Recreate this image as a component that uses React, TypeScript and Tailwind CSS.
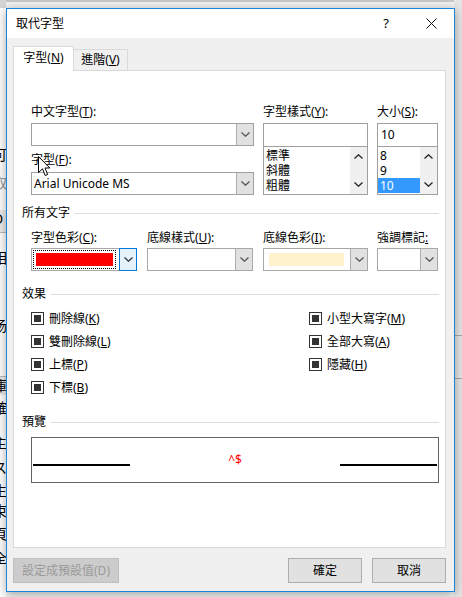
import React from "react";

const Chevron = ({ up = false, color = "#444" }: { up?: boolean; color?: string }) => (
    <svg width="9" height="5" viewBox="0 0 9 5">
        <path
            d={up ? "M0.5 4.5 L4.5 0.8 L8.5 4.5" : "M0.5 0.5 L4.5 4.2 L8.5 0.5"}
            fill="none"
            stroke={color}
            strokeWidth="1.3"
        />
    </svg>
);

function DropButton({ focused = false }: { focused?: boolean }) {
    if (focused) {
        return (
            <div className="w-[18px] -my-px -mr-px flex items-center justify-center bg-[#e5f1fb] border border-[#0078d7]">
                <Chevron color="#333" />
            </div>
        );
    }
    return (
        <div className="w-[17px] flex items-center justify-center bg-[#e1e1e1] border-l border-[#adadad]">
            <Chevron color="#555" />
        </div>
    );
}

function EditCombo({ value = "" }: { value?: string }) {
    return (
        <div className="flex h-[23px] border border-[#a0a0a0] bg-white">
            <div className="flex-1 pl-[2px] leading-[21px]">{value}</div>
            <DropButton />
        </div>
    );
}

function ColorCombo({ fill, focused = false }: { fill?: string; focused?: boolean }) {
    return (
        <div className="flex h-[23px] border border-[#a8a8a8] bg-white">
            <div className="flex-1 p-[1px] pr-[3px]">
                {fill === "red" && (
                    <div className="h-full border border-dotted border-black p-[2px]">
                        <div className="h-full bg-[#ff0000]" />
                    </div>
                )}
                {fill === "cream" && (
                    <div className="h-full p-[3px] pl-[4px]">
                        <div className="h-full bg-[#fff2cc]" />
                    </div>
                )}
            </div>
            <DropButton focused={focused} />
        </div>
    );
}

function ListBox({ items, selected }: { items: string[]; selected?: number }) {
    return (
        <div className="flex h-[49px] border border-[#a0a0a0] bg-white">
            <div className="flex-1 pt-[1px]">
                {items.map((it, i) => (
                    <div
                        key={it}
                        className={
                            i === selected
                                ? "h-[15px] leading-[15px] pl-[2px] overflow-hidden bg-[#3399ff] text-white"
                                : "h-[15px] leading-[15px] pl-[2px] overflow-hidden"
                        }
                    >
                        {it}
                    </div>
                ))}
            </div>
            <div className="w-[17px] bg-[#f0f0f0] flex flex-col items-center justify-between py-[7px]">
                <Chevron up color="#222" />
                <Chevron color="#222" />
            </div>
        </div>
    );
}

function Label({ children }: { children: React.ReactNode }) {
    return <div className="h-[16px] leading-[16px] whitespace-nowrap">{children}</div>;
}

const U = ({ children }: { children: React.ReactNode }) => (
    <span className="underline underline-offset-[1px]">{children}</span>
);

function Heading({ text }: { text: string }) {
    return (
        <div className="flex items-center h-[16px] pl-[8px] pr-[6px]">
            <span className="leading-[16px]">{text}</span>
            <div className="flex-1 h-px bg-[#dcdcdc] ml-[5px]" />
        </div>
    );
}

function Check({ children }: { children: React.ReactNode }) {
    return (
        <div className="flex items-center h-[23px]">
            <div className="w-[13px] h-[13px] border border-[#333] flex items-center justify-center bg-white">
                <div className="w-[7px] h-[7px] bg-[#333]" />
            </div>
            <span className="ml-[5px] leading-[16px]">{children}</span>
        </div>
    );
}

function Btn({ children, disabled = false, wide = false }: { children: React.ReactNode; disabled?: boolean; wide?: boolean }) {
    return (
        <div
            className={
                (wide ? "w-[106px] " : "w-[74px] ") +
                (disabled
                    ? "h-[25px] flex items-center justify-center bg-[#cccccc] border border-[#bfbfbf] text-[#9a9a9a]"
                    : "h-[25px] flex items-center justify-center bg-[#e1e1e1] border border-[#adadad]")
            }
        >
            {children}
        </div>
    );
}

export default function App() {
    return (
        <div className="relative w-[462px] h-[597px] overflow-hidden bg-[#f2f2f2] font-['Noto_Sans','Noto_Sans_CJK_TC',sans-serif] text-[12px] text-black">
            {/* document behind the dialog */}
            <div className="flex h-full">
                <div className="w-[6px] h-full bg-white overflow-hidden flex flex-col text-[14px] leading-[18px]">
                    <div className="h-[8px] bg-[#d6d6d6]" />
                    <div className="h-[138px]" />
                    <div className="-ml-[7px]">可</div>
                    <div className="-ml-[7px] mt-[10px] text-[#9a9a9a]">取</div>
                    <div className="mt-[18px] h-[22px] bg-[#ececec] -ml-[7px]">D</div>
                    <div className="h-px bg-[#bdbdbd]" />
                    <div className="-ml-[7px] mt-[16px]">相</div>
                    <div className="-ml-[7px] mt-[50px]">杨</div>
                    <div className="mt-[41px] h-px bg-[#bdbdbd]" />
                    <div className="-ml-[7px] bg-[#ececec]">庫</div>
                    <div className="-ml-[7px] mt-[4px]">確</div>
                    <div className="-ml-[7px] mt-[17px]">主</div>
                    <div className="-ml-[7px] mt-[7px]">ス</div>
                    <div className="-ml-[7px] mt-[5px]">生</div>
                    <div className="-ml-[7px] mt-[2px]">束</div>
                    <div className="-ml-[7px] mt-[5px]">頁</div>
                    <div className="-ml-[7px] mt-[6px]">全</div>
                </div>
                <div className="flex-1 flex flex-col">
                    <div className="h-[2px] bg-[#c8c8c8]" />
                </div>
                <div className="w-[8px] h-full bg-[#e6e6e6] flex flex-col">
                    <div className="mt-[335px] h-px bg-[#a8a8a8]" />
                    <div className="mt-[42px] h-px bg-[#a8a8a8]" />
                </div>
            </div>

            {/* dialog window */}
            <div className="absolute left-[6px] top-[8px] w-[449px] h-[584px] border border-[#1883d7] bg-[#f0f0f0] flex flex-col shadow-[0_2px_10px_rgba(0,0,0,0.35)]">
                {/* title bar */}
                <div className="h-[29px] bg-white flex items-center shrink-0">
                    <span className="pl-[9px] leading-[16px] flex-1">取代字型</span>
                    <div className="w-[46px] h-full flex items-center justify-center text-[13px] pl-[2px]">?</div>
                    <div className="w-[46px] h-full flex items-center justify-center">
                        <svg width="11" height="11" viewBox="0 0 11 11">
                            <path d="M0.5 0.5 L10.5 10.5 M10.5 0.5 L0.5 10.5" stroke="#111" strokeWidth="1" />
                        </svg>
                    </div>
                </div>

                {/* body */}
                <div className="flex-1 flex flex-col pt-[8px] pl-[6px] pr-[8px]">
                    {/* tabs */}
                    <div className="flex items-end h-[24px] relative z-10">
                        <div className="w-[61px] h-[25px] -mb-px bg-white border border-b-0 border-[#d9d9d9] flex items-center justify-center pb-[2px]">
                            字型(<U>N</U>)
                        </div>
                        <div className="w-[54px] h-[21px] border border-l-0 border-b-0 border-[#d9d9d9] flex items-center justify-center">
                            進階(<U>V</U>)
                        </div>
                    </div>

                    {/* tab panel */}
                    <div className="h-[478px] border border-[#d9d9d9] bg-white flex flex-col">
                        <div className="pl-[17px] pt-[33px] flex gap-[9px]">
                            <div className="w-[223px] flex flex-col">
                                <Label>
                                    中文字型(<U>T</U>):
                                </Label>
                                <div className="mt-[3px]">
                                    <EditCombo />
                                </div>
                                <div className="mt-[6px]">
                                    <Label>
                                        字型(<U>F</U>):
                                    </Label>
                                </div>
                                <div className="mt-[4px]">
                                    <EditCombo value="Arial Unicode MS" />
                                </div>
                            </div>
                            <div className="w-[105px] flex flex-col">
                                <Label>
                                    字型樣式(<U>Y</U>):
                                </Label>
                                <div className="mt-[3px] h-[23px] border border-b-0 border-[#a0a0a0] bg-white" />
                                <ListBox items={["標準", "斜體", "粗體"]} />
                            </div>
                            <div className="w-[61px] flex flex-col">
                                <Label>
                                    大小(<U>S</U>):
                                </Label>
                                <div className="mt-[3px] h-[23px] border border-b-0 border-[#a0a0a0] bg-white pl-[3px] leading-[22px]">
                                    10
                                </div>
                                <ListBox items={["8", "9", "10"]} selected={2} />
                            </div>
                        </div>

                        <div className="mt-[10px]">
                            <Heading text="所有文字" />
                        </div>
                        <div className="pl-[17px] mt-[9px] flex">
                            <div className="w-[106px] flex flex-col">
                                <Label>
                                    字型色彩(<U>C</U>):
                                </Label>
                                <div className="mt-[2px]">
                                    <ColorCombo fill="red" focused />
                                </div>
                            </div>
                            <div className="w-[106px] ml-[10px] flex flex-col">
                                <Label>
                                    底線樣式(<U>U</U>):
                                </Label>
                                <div className="mt-[2px]">
                                    <ColorCombo />
                                </div>
                            </div>
                            <div className="w-[105px] ml-[10px] flex flex-col">
                                <Label>
                                    底線色彩(<U>I</U>):
                                </Label>
                                <div className="mt-[2px]">
                                    <ColorCombo fill="cream" />
                                </div>
                            </div>
                            <div className="w-[61px] ml-[9px] flex flex-col">
                                <Label>
                                    強調標記<U>:</U>
                                </Label>
                                <div className="mt-[2px]">
                                    <ColorCombo />
                                </div>
                            </div>
                        </div>

                        <div className="mt-[15px]">
                            <Heading text="效果" />
                        </div>
                        <div className="pl-[17px] mt-[5px] grid grid-cols-[278px_auto]">
                            <div className="flex flex-col">
                                <Check>
                                    刪除線(<U>K</U>)
                                </Check>
                                <Check>
                                    雙刪除線(<U>L</U>)
                                </Check>
                                <Check>
                                    上標(<U>P</U>)
                                </Check>
                                <Check>
                                    下標(<U>B</U>)
                                </Check>
                            </div>
                            <div className="flex flex-col">
                                <Check>
                                    小型大寫字(<U>M</U>)
                                </Check>
                                <Check>
                                    全部大寫(<U>A</U>)
                                </Check>
                                <Check>
                                    隱藏(<U>H</U>)
                                </Check>
                            </div>
                        </div>

                        <div className="mt-[15px]">
                            <Heading text="預覽" />
                        </div>
                        <div className="ml-[17px] mt-[7px] w-[408px] h-[46px] border border-[#646464] flex items-start">
                            <div className="ml-[1px] mt-[26px] w-[97px] h-[2px] bg-black" />
                            <div className="flex-1 text-center mt-[14px] leading-[16px] text-[#ff0000]">^$</div>
                            <div className="mr-[1px] mt-[26px] w-[97px] h-[2px] bg-black" />
                        </div>
                    </div>

                    {/* buttons */}
                    <div className="mt-[10px] flex items-center">
                        <Btn disabled wide>
                            設定成預設值(D)
                        </Btn>
                        <div className="flex-1" />
                        <Btn>確定</Btn>
                        <div className="w-[10px]" />
                        <Btn>取消</Btn>
                    </div>
                </div>
            </div>

            {/* mouse pointer */}
            <svg className="absolute left-[38px] top-[156px]" width="13" height="21" viewBox="0 0 13 21">
                <path d="M0.5 0.5 L0.5 16.5 L4.5 12.8 L7.2 19.5 L9.6 18.5 L7 12 L11.8 12 Z" fill="white" stroke="black" strokeWidth="1" />
            </svg>
        </div>
    );
}
